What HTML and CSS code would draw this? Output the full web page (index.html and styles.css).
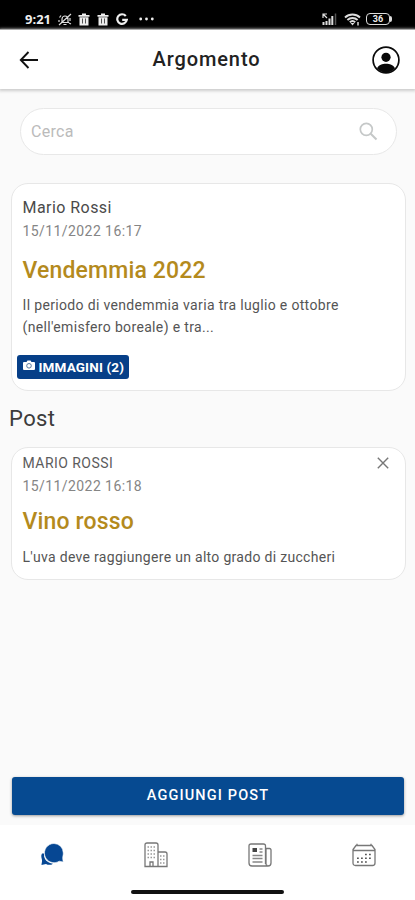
FILE: index.html
```html
<!DOCTYPE html>
<html lang="it">
<head>
<meta charset="utf-8">
<meta name="viewport" content="width=device-width, initial-scale=1">
<title>Argomento</title>
<link rel="stylesheet" href="styles.css">
</head>
<body>
<div class="status">
  <span class="time">9:21</span>
  <svg class="muted" width="14" height="13" viewBox="0 0 14 13" fill="none" stroke="#ddd" stroke-width="1.2"><path d="M3 9.5h8M4 9V6a3 3 0 0 1 6 0v3M5.500 11.500h3M1 12 13 1M1.500 4.500 3 2.500M11 10l2 1M12 5v3M1 7v2"/></svg>
  <svg class="trash" width="12" height="13" viewBox="0 0 12 13"><path d="M.5 2H4V.5h4V2h3.500v1.700H.5zM1.500 4.300h9V12.500h-9z" fill="#eee"/><path d="M4.500 5.500v5M7.500 5.500v5" stroke="#555"/></svg>
  <svg class="trash" width="12" height="13" viewBox="0 0 12 13"><path d="M.5 2H4V.5h4V2h3.500v1.700H.5zM1.500 4.300h9V12.500h-9z" fill="#eee"/><path d="M4.500 5.500v5M7.500 5.500v5" stroke="#555"/></svg>
  <svg width="12" height="13" viewBox="0 0 12 13" fill="none" stroke="#eee" stroke-width="2.200"><path d="M9.800 3A4.800 4.800 0 1 0 10.800 6.900H6.200"/></svg>
  <svg class="dots" width="15" height="4" viewBox="0 0 15 4" fill="#eee"><circle cx="1.700" cy="2" r="1.400"/><circle cx="7.500" cy="2" r="1.400"/><circle cx="13.300" cy="2" r="1.400"/></svg>
  <svg class="signal" width="15" height="12" viewBox="0 0 15 12" fill="none" stroke="#ddd"><path d="M1 5V1h4M1 1l4 4" stroke-width="1.200"/><path d="M1.500 12V9M4.500 12V8M7.500 12V5.500M10.300 12V3" stroke-width="2"/><path d="M13.500 12V.5" stroke="#555" stroke-width="1.500"/></svg>
  <svg class="wifi" width="17" height="13" viewBox="0 0 17 13" fill="none" stroke="#ddd" stroke-width="1.900"><path d="M1 4.500a11 11 0 0 1 15 0M3.400 7a7.600 7.600 0 0 1 10.200 0M5.800 9.300a4 4 0 0 1 5.400 0"/><path d="m6.500 10 2 2.500 2-2.500z" fill="#ddd" stroke="none"/><path d="M14 9v3.500" stroke-width="1.500"/></svg>
  <span class="battery">36</span><i class="cap"></i>
</div>
<header class="bar">
  <svg width="20" height="18" viewBox="0 0 20 18" fill="none" stroke="#111" stroke-width="1.900"><path d="M9.500 1 1.800 9l7.700 8M2 9h17"/></svg>
  <h1>Argomento</h1>
  <svg width="28" height="28" viewBox="0 0 28 28"><circle cx="14" cy="14" r="12.900" fill="#fff" stroke="#0b0b0b" stroke-width="1.700"/><circle cx="14" cy="11.300" r="4.600" fill="#080808"/><path d="M5 22.200c2-3.400 5.200-4.400 9-4.400s7 1 9 4.400A12.600 12.600 0 0 1 14 26.700 12.600 12.600 0 0 1 5 22.200z" fill="#080808"/></svg>
</header>
<main>
  <label class="search"><span>Cerca</span>
    <svg width="20" height="20" viewBox="0 0 20 20" fill="none" stroke="#c5c8c8" stroke-width="1.700"><circle cx="8.300" cy="7.300" r="6"/><path d="m12.700 11.700 5.800 5.800" stroke-width="2"/></svg>
  </label>
  <article class="card topic">
    <p class="author">Mario Rossi</p>
    <p class="date">15/11/2022 16:17</p>
    <h2>Vendemmia 2022</h2>
    <p class="text">Il periodo di vendemmia varia tra luglio e ottobre<br>(nell'emisfero boreale) e tra...</p>
    <span class="badge"><svg width="12" height="11" viewBox="0 0 12 11"><path d="M1 2h2.500L4.500.5h3L8.500 2H11q1 0 1 1v6q0 1-1 1H1q-1 0-1-1V3q0-1 1-1z" fill="#fff"/><circle cx="6" cy="5.800" r="2.300" fill="none" stroke="#55789f" stroke-width="1"/></svg><b>IMMAGINI (2)</b></span>
  </article>
  <h3>Post</h3>
  <article class="card post">
    <div class="row"><p class="author">MARIO ROSSI</p><svg width="12" height="12" viewBox="0 0 12 12" stroke="#777" stroke-width="1.400"><path d="m.8.8 10.400 10.400M11.200.8.8 11.200"/></svg></div>
    <p class="date">15/11/2022 16:18</p>
    <h2>Vino rosso</h2>
    <p class="text">L'uva deve raggiungere un alto grado di zuccheri</p>
  </article>
  <button class="add"><span>AGGIUNGI POST</span></button>
</main>
<nav>
  <div class="tabs">
    <svg width="24" height="24" viewBox="0 0 24 24"><path d="M2 10.500C.5 13 1.800 15 2 17c.2 2-.5 3.500-.5 5l4.500-1c2 1.200 5 1.200 7-.3C7 20 3.500 16 4 10.500z" fill="#064793"/><path d="M14 .5a9.500 9.500 0 0 1 9.300 9.500c0 2.500-.8 4-.6 5.500l.5 3.500-4-.8A9.600 9.600 0 1 1 14 .5z" fill="#064793" stroke="#fff" stroke-width=".6"/></svg>
    <svg width="24" height="26" viewBox="0 0 24 26" fill="none" stroke="#777" stroke-width="1.300"><path d="M1 24.500V3q0-2 2-2h9q2 0 2 2v21.500zM14.500 10H21q2 0 2 2v12.500h-8.500M6 24v-4h3v4"/><path d="M3.500 5h8M3.500 8.500h8M3.500 12h8M3.500 15.500h8M16 14h5M16 17.500h5M16 21h5" stroke="#999" stroke-dasharray="1.500 1.500"/></svg>
    <svg width="24" height="24" viewBox="0 0 24 24" fill="none" stroke="#777" stroke-width="1.300"><path d="M17.500 21V3q0-2-2-2H3Q1 1 1 3v17q0 3 3 3h16q3 0 3-3V7q0-1.500-1.500-1.500H18V21q0 1.500 1.500 1.500"/><path d="M4.500 5H9v4H4.500z" fill="#444" stroke="none"/><path d="M11.500 6h3M11.500 9h3M4.500 12.500h10M4.500 15.500h10M4.500 19h10" stroke="#888"/></svg>
    <svg width="24" height="24" viewBox="0 0 24 24" fill="none" stroke="#777" stroke-width="1.300"><path d="M4 2.500h16l3 4V20q0 2.500-2.500 2.500h-17Q1 22.500 1 20V6.500zM1 7.500h22M5 .8v2M19 .8v2"/><path d="M13 11.500h7M5 15.200h15M5 19h10" stroke="#555" stroke-width="1.600" stroke-dasharray="1.800 2.200"/></svg>
  </div>
  <div class="home"></div>
</nav>
</body>
</html>
```
FILE: styles.css
```css
* { box-sizing: border-box; margin: 0; }
body { height: 900px; display: flex; flex-direction: column; background: #fafafa; font-family: Roboto, sans-serif; color: #222; overflow: hidden; }
svg { display: block; flex: none; }
.status { height: 29px; flex: none; background: #000; display: flex; align-items: center; padding: 9px 23px 0 25px; color: #eee; }
.time { font: 700 13px/16px "Open Sans", sans-serif; width: 27px; margin-right: 6px; white-space: nowrap; }
.trash { margin-left: 6px; }
.trash + .trash { margin: 0 7px; }
.dots { margin-left: 11px; }
.signal { margin-left: auto; }
.wifi { margin: 0 5px 0 7px; }
.battery { width: 24px; height: 12px; border: 1.5px solid #ddd; border-radius: 4px; font: 700 9px/10px Roboto, sans-serif; text-align: center; }
.cap { width: 2px; height: 6px; background: #ddd; border-radius: 0 2px 2px 0; }
.bar { height: 60px; flex: none; background: #fff; border-top: 1px solid #aaa; box-shadow: 0 1px 3px 1px #ccc; display: flex; align-items: center; justify-content: space-between; padding: 0 15px 0 19px; }
h1 { font-size: 20px; font-weight: 500; letter-spacing: .9px; line-height: 24px; padding: 0 0 1px 2px; }
main { flex: 1; display: flex; flex-direction: column; padding: 19px 9px 10px 11px; }
.search { height: 47px; flex: none; margin: 0 9px 28px; border: 1.5px solid #e8e8e8; border-radius: 24px; background: #fff; display: flex; align-items: center; justify-content: space-between; padding: 0 18px 0 10px; color: #bbb; font-size: 16px; letter-spacing: .3px; }
.card { background: #fff; border: 1.5px solid #e7e7e7; border-radius: 17px; padding: 0 11px 0 10.5px; }
.topic { height: 208px; padding-top: 13px; }
.author { font-size: 16px; line-height: 22px; letter-spacing: .45px; color: #4a4a4a; }
.date { font-size: 14px; line-height: 18px; letter-spacing: .42px; color: #858585; margin-top: 3px; }
h2 { font-size: 23px; line-height: 28px; font-weight: 500; letter-spacing: .15px; color: #b48a1d; margin-top: 17px; }
.text { font-size: 14px; line-height: 22px; letter-spacing: .34px; color: #555; margin-top: 10px; white-space: nowrap; }
.topic .text { margin-top: 9px; }
.badge { width: 112px; height: 24px; margin: 17px 0 0 -6px; border-radius: 3px; background: #063f88; color: #fff; display: flex; align-items: center; padding-left: 6px; gap: 4px; font-size: 13.5px; letter-spacing: .15px; white-space: nowrap; }
.badge svg { margin-bottom: 3px; }
h3 { font-size: 22px; line-height: 28px; font-weight: 400; letter-spacing: .4px; color: #3c3c3c; margin: 14px 0 14px -2px; }
.post { height: 133px; padding-top: 4px; }
.row { display: flex; align-items: center; justify-content: space-between; padding-right: 5px; }
.post .author { font-size: 14px; color: #5c5c5c; }
.post .date { margin-top: 3px; }
.post h2 { margin-top: 13px; }
.post .text { margin-top: 10px; letter-spacing: .3px; }
.add { height: 38px; margin: auto 2px 0 1px; border: 0; border-radius: 3px; background: #064a91; color: #fff; box-shadow: 0 1px 3px #999; font: 500 14.5px/20px Roboto, sans-serif; letter-spacing: 1.15px; padding: 0; }
nav { height: 75px; flex: none; background: #fff; }
.tabs { height: 60px; display: grid; grid-template-columns: repeat(4, 104px); place-items: center; }
.home { width: 153px; height: 4px; margin: 5px auto 0; background: #111; border-radius: 2px; }
```
